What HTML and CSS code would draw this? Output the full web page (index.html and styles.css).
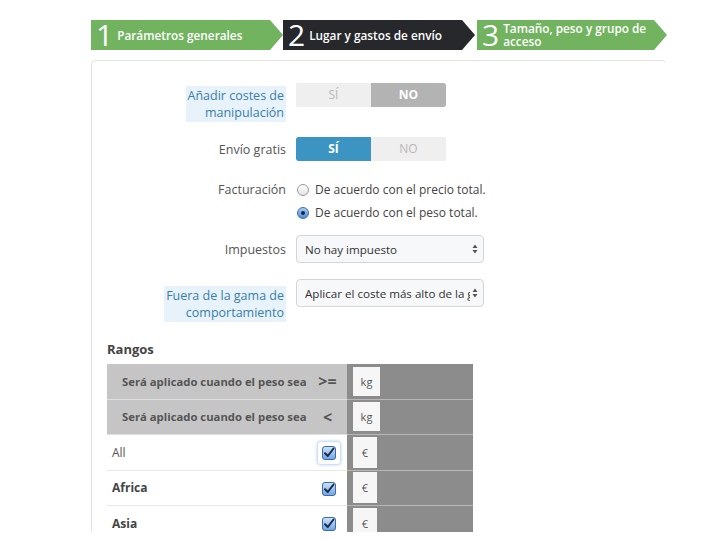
FILE: index.html
```html
<!DOCTYPE html>
<html lang="es">

<head>
  <meta charset="UTF-8" />
  <title>Transportista - Lugar y gastos de envío</title>
  <link rel="stylesheet" href="styles.css">
</head>

<body>
  <div class="page">
    <!-- Wizard steps -->
    <div class="steps">
      <div class="step step-done">
        <span class="step-num">1</span>
        <span class="step-label">Parámetros generales</span>
      </div>
      <div class="step step-current">
        <span class="step-num">2</span>
        <span class="step-label">Lugar y gastos de envío</span>
      </div>
      <div class="step step-done step-last">
        <span class="step-num">3</span>
        <span class="step-label">Tamaño, peso y grupo de<br>acceso</span>
      </div>
    </div>

    <!-- Form panel -->
    <div class="panel">
      <div class="form-row row-handling">
        <label class="form-label hint">Añadir costes de<br>manipulación</label>
        <div class="switch">
          <span class="switch-opt">SÍ</span>
          <span class="switch-opt active-off">NO</span>
        </div>
      </div>

      <div class="form-row row-free">
        <label class="form-label">Envío gratis</label>
        <div class="switch">
          <span class="switch-opt active-on">SÍ</span>
          <span class="switch-opt">NO</span>
        </div>
      </div>

      <div class="form-row row-billing">
        <label class="form-label line">Facturación</label>
        <div class="radios">
          <div class="radio-opt"><span class="radio"></span>De acuerdo con el precio total.</div>
          <div class="radio-opt"><span class="radio checked"></span>De acuerdo con el peso total.</div>
        </div>
      </div>

      <div class="form-row row-tax">
        <label class="form-label">Impuestos</label>
        <div class="select">
          <span class="select-text">No hay impuesto</span>
          <svg class="select-arrow" width="6" height="10" viewBox="0 0 6 10"><path d="M3 0.5L5.5 4H0.5Z M3 9.5L5.5 6H0.5Z" fill="#555"/></svg>
        </div>
      </div>

      <div class="form-row row-range">
        <label class="form-label hint">Fuera de la gama de<br>comportamiento</label>
        <div class="select">
          <span class="select-text">Aplicar el coste más alto de la gama definida</span>
          <svg class="select-arrow" width="6" height="10" viewBox="0 0 6 10"><path d="M3 0.5L5.5 4H0.5Z M3 9.5L5.5 6H0.5Z" fill="#555"/></svg>
        </div>
      </div>

      <h4 class="ranges-title">Rangos</h4>

      <table class="ranges">
        <colgroup>
          <col class="col-name">
          <col class="col-op">
          <col class="col-val">
        </colgroup>
        <tr class="range-head">
          <td class="cell-name">Será aplicado cuando el peso sea</td>
          <td class="cell-op">&gt;=</td>
          <td class="cell-val"><span class="addon addon-kg">kg</span></td>
        </tr>
        <tr class="range-head">
          <td class="cell-name">Será aplicado cuando el peso sea</td>
          <td class="cell-op">&lt;</td>
          <td class="cell-val"><span class="addon addon-kg">kg</span></td>
        </tr>
        <tr class="zone zone-all">
          <td class="cell-name">All</td>
          <td class="cell-op"><span class="check focus"><svg width="14" height="14" viewBox="0 0 14 14"><use href="#cb"/></svg></span></td>
          <td class="cell-val"><span class="addon addon-eur">€</span></td>
        </tr>
        <tr class="zone">
          <td class="cell-name">Africa</td>
          <td class="cell-op"><span class="check"><svg width="14" height="14" viewBox="0 0 14 14"><use href="#cb"/></svg></span></td>
          <td class="cell-val"><span class="addon addon-eur">€</span></td>
        </tr>
        <tr class="zone">
          <td class="cell-name">Asia</td>
          <td class="cell-op"><span class="check"><svg width="14" height="14" viewBox="0 0 14 14"><use href="#cb"/></svg></span></td>
          <td class="cell-val"><span class="addon addon-eur">€</span></td>
        </tr>
      </table>
    </div>
  </div>

  <!-- checkbox glyph -->
  <svg width="0" height="0" style="position:absolute">
    <defs>
      <linearGradient id="cbfill" x1="0" y1="0" x2="0" y2="1">
        <stop offset="0" stop-color="#cfe3f8" />
        <stop offset="1" stop-color="#6ea4e4" />
      </linearGradient>
      <g id="cb">
        <rect x="0.5" y="0.5" width="13" height="13" rx="2.5" fill="url(#cbfill)" stroke="#3d6aa8" />
        <path d="M3 7.2L5.8 10L11.5 2.5" fill="none" stroke="#1b2a44" stroke-width="2" stroke-linecap="round" stroke-linejoin="round" />
      </g>
    </defs>
  </svg>
</body>

</html>
```

FILE: styles.css
```css
body {
  margin: 0;
  background: #fff;
  font-family: 'Open Sans', 'Noto Sans', sans-serif;
  color: #555;
}

.page {
  height: 532px;
  overflow: hidden;
  padding: 20px 0 0 91px;
  box-sizing: border-box;
}

/* Wizard steps */
.steps {
  display: flex;
  height: 30px;
}

.step {
  display: flex;
  align-items: center;
  height: 30px;
  width: 192px;
  padding-left: 5px;
  box-sizing: border-box;
  color: #fff;
  clip-path: polygon(0 0, calc(100% - 13px) 0, 100% 50%, calc(100% - 13px) 100%, 0 100%);
}

.step-done {
  background: #72b35f;
}

.step-current {
  background: #26282c;
}

.step-last {
  width: 190px;
  margin-left: 2px;
}

.step-num {
  font-size: 30px;
  font-weight: 400;
  line-height: 30px;
  margin-right: 4px;
}

.step-label {
  font-size: 11.8px;
  font-weight: 600;
  line-height: 13px;
}

/* Panel */
.panel {
  margin-top: 10px;
  width: 576px;
  height: 472px;
  box-sizing: border-box;
  border: 1px solid #e2e2e2;
  border-right-color: transparent;
  border-bottom: none;
  border-radius: 5px 5px 0 0;
  padding: 22px 15px 0;
}

.form-row {
  display: grid;
  grid-template-columns: 179px auto;
  column-gap: 10px;
  align-items: center;
  justify-items: start;
}

.form-label {
  justify-self: end;
  text-align: right;
  font-size: 12.5px;
  line-height: 17px;
  color: #555;
}

.form-label.hint {
  background: #e7f2fa;
  color: #3a7fab;
  padding: 1px 2px;
}

.form-label.line {
  line-height: 23px;
}

.row-handling {
  align-items: start;
}

.row-handling .form-label {
  margin-top: 3px;
}

.row-free {
  margin-top: 15px;
}

.row-billing {
  margin-top: 17px;
  align-items: start;
}

.row-tax {
  margin-top: 11px;
}

.row-range {
  margin-top: 16px;
  align-items: start;
}

.row-range .form-label {
  margin-top: 7px;
}

/* Switch */
.switch {
  display: flex;
  width: 150px;
  height: 24px;
  border-radius: 3px;
  overflow: hidden;
  box-shadow: inset 0 0 0 1px #dedede;
}

.switch-opt {
  flex: 1;
  text-align: center;
  line-height: 24px;
  font-size: 12px;
  color: #b8b8b8;
  background: #efefef;
}

.switch-opt.active-off {
  background: #b3b3b3;
  color: #fff;
  font-weight: 700;
}

.switch-opt.active-on {
  background: #3c94c3;
  color: #fff;
  font-weight: 700;
}

/* Radios */
.radio-opt {
  display: flex;
  align-items: center;
  height: 23px;
  font-size: 12px;
  color: #444;
}

.radio {
  width: 10px;
  height: 10px;
  border-radius: 50%;
  border: 1px solid #9a9a9a;
  background: linear-gradient(#fff, #e4e4e4);
  margin: 0 6px 0 1px;
  display: flex;
  align-items: center;
  justify-content: center;
}

.radio.checked {
  border-color: #3b6dab;
  background: linear-gradient(#a9cdf4, #4f8ddc);
}

.radio.checked::after {
  content: "";
  width: 4px;
  height: 4px;
  border-radius: 50%;
  background: #18253b;
}

/* Select */
.select {
  display: flex;
  align-items: center;
  width: 188px;
  height: 28px;
  box-sizing: border-box;
  border: 1px solid #d3d6d8;
  border-radius: 4px;
  background: #f6f8f9;
  padding: 0 5px 0 8px;
  font-size: 11.6px;
  color: #333;
}

.select-text {
  flex: 1;
  white-space: nowrap;
  overflow: hidden;
}

.select-arrow {
  flex: none;
  margin-left: 2px;
}

/* Ranges */
.ranges-title {
  margin: 18px 0 6px;
  font-size: 13px;
  font-weight: 700;
  line-height: 18px;
  color: #444;
}

.ranges {
  border-collapse: collapse;
  table-layout: fixed;
  width: 366px;
}

.col-name {
  width: 203px;
}

.col-op {
  width: 37px;
}

.col-val {
  width: 126px;
}

.ranges td {
  height: 34.5px;
  padding: 0;
  border-bottom: 1px solid #e8e8e8;
  white-space: nowrap;
}

.cell-name {
  font-size: 12px;
}

.cell-op {
  text-align: center;
}

.cell-val {
  background: #8c8c8c;
  padding-left: 6px !important;
  border-bottom-color: #b8b8b8 !important;
}

.range-head .cell-name,
.range-head .cell-op {
  background: #c5c5c5;
  color: #555;
  font-weight: 700;
}

.range-head .cell-name {
  padding-left: 15px;
  font-size: 11.3px;
}

.range-head .cell-op {
  font-size: 16px;
  padding-right: 2px;
}

.range-head td {
  border-bottom-color: #e0e0e0;
}

.zone .cell-name {
  padding-left: 5px;
  font-weight: 700;
  color: #444;
}

.zone-all .cell-name {
  font-weight: 400;
  color: #555;
}

.check {
  display: inline-flex;
  padding: 4px;
  border-radius: 3px;
  vertical-align: middle;
}

.check.focus {
  background: #fff;
  box-shadow: 0 0 3px 1px rgba(90, 150, 220, 0.45);
}

.addon {
  display: inline-block;
  vertical-align: middle;
  background: #f6f6f6;
  font-size: 11px;
  color: #555;
  text-align: center;
}

.addon-kg {
  width: 27px;
  height: 29px;
  line-height: 29px;
}

.addon-eur {
  width: 24px;
  height: 31px;
  line-height: 31px;
}
```
